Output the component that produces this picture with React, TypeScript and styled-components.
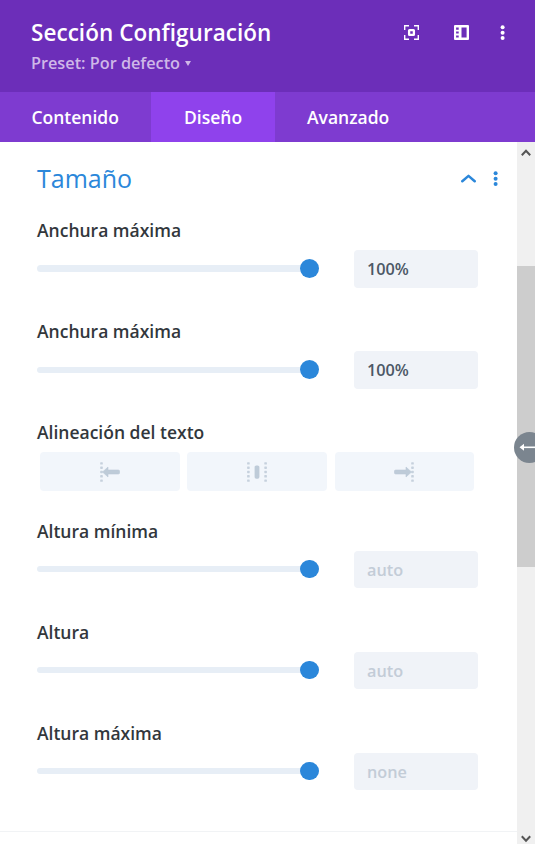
import React from 'react';
import styled, { createGlobalStyle } from 'styled-components';

const GlobalStyle = createGlobalStyle`
  * { box-sizing: border-box; }
  body {
    margin: 0;
    background: #fff;
    font-family: "Open Sans", sans-serif;
    font-weight: 600;
    overflow: hidden;
  }
  svg { display: block; flex: none; }
  button, input { font: inherit; border: 0; padding: 0; margin: 0; }
`;

const Modal = styled.div`
  width: 535px;
  height: 844px;
  display: flex;
  flex-direction: column;
  overflow: hidden;
  position: relative;
`;

const Header = styled.header`
  height: 92px;
  flex: none;
  display: flex;
  justify-content: space-between;
  padding: 17px 30.5px 0 31px;
  background: #6c2eb9;
  color: #fff;
`;

const Title = styled.h1`
  margin: 0;
  font-size: 22.5px;
  line-height: 32px;
  font-weight: 600;
  letter-spacing: 0.04px;
  white-space: nowrap;
`;

const Preset = styled.div`
  display: flex;
  align-items: center;
  gap: 5px;
  font-size: 16.25px;
  line-height: 28px;
  color: #cfb7e8;
`;

const HeaderActions = styled.div`
  display: flex;
  align-items: center;
  height: 15px;
  margin-top: 8px;
`;

const IconButton = styled.button<{ $gap?: number }>`
  display: flex;
  background: none;
  color: inherit;
  margin-left: ${({ $gap = 0 }) => $gap}px;
`;

const Tabs = styled.nav`
  height: 50px;
  flex: none;
  display: flex;
  background: #7e3bd0;
`;

const Tab = styled.button<{ $width: number; $inset?: number; $active?: boolean }>`
  width: ${({ $width }) => $width}px;
  height: 50px;
  padding-left: ${({ $inset = 32 }) => $inset}px;
  text-align: left;
  font-size: 17.5px;
  color: #fff;
  background: ${({ $active }) => ($active ? '#8f42ec' : 'transparent')};
`;

const Body = styled.div`
  display: flex;
  height: 702px;
`;

const Panel = styled.main`
  width: 517px;
  background: #fff;
`;

const Section = styled.section`
  height: 690px;
  padding-left: 37px;
  border-bottom: 1px solid #f1f3f5;
`;

const SectionHeader = styled.div`
  height: 75px;
  display: flex;
  justify-content: space-between;
  padding-right: 19px;
  color: #2b87da;
`;

const SectionTitle = styled.h2`
  margin: 0;
  padding-top: 19px;
  font-size: 25px;
  line-height: 34px;
  font-weight: 400;
`;

const SectionActions = styled.div`
  display: flex;
  align-items: center;
  height: 15px;
  margin-top: 29px;
`;

const Field = styled.div<{ $space: number }>`
  margin-bottom: ${({ $space }) => $space}px;
`;

const Label = styled.label`
  display: block;
  height: 27px;
  margin-bottom: 6px;
  font-size: 17.5px;
  line-height: 27px;
  color: #32373c;
`;

const Control = styled.div`
  display: flex;
  align-items: flex-start;
  gap: 35px;
`;

const Slider = styled.div<{ $knob: number }>`
  width: 282px;
  height: ${({ $knob }) => $knob}px;
  margin-top: 9px;
  display: flex;
  align-items: center;
`;

const Track = styled.div<{ $thick: number }>`
  width: 263px;
  height: ${({ $thick }) => $thick}px;
  border-radius: 4px 0 0 4px;
  background: #e7eef6;
`;

const Knob = styled.div<{ $size: number }>`
  width: 19px;
  height: ${({ $size }) => $size}px;
  border-radius: 10px;
  background: #2b87da;
  box-shadow: -3px 0 0 -3px #e7eef6;
`;

const ValueInput = styled.input<{ $height: number }>`
  width: 124px;
  height: ${({ $height }) => $height}px;
  padding: 0 13px;
  border-radius: 4px;
  background: #f0f3f8;
  color: #4c5866;
  font-size: 16.25px;
  outline: none;
  &::placeholder { color: #c3ccd7; opacity: 1; }
`;

const AlignGroup = styled.div`
  display: grid;
  grid-template-columns: 140px 140px 139px;
  justify-content: space-between;
  width: 437px;
  column-gap: 7px;
  padding-left: 3px;

  & > :nth-child(2) { margin-right: 0.5px; margin-left: -0.5px; }
`;

const AlignButton = styled.button`
  height: 39px;
  display: flex;
  align-items: center;
  justify-content: center;
  padding-right: 1px;
  border-radius: 4px;
  background: #f2f6fb;
`;

const Scrollbar = styled.div`
  width: 18px;
  display: flex;
  flex-direction: column;
  align-items: center;
  background: #f0f0f0;
`;

const ScrollArrow = styled.div<{ $down?: boolean }>`
  height: ${({ $down }) => ($down ? 9 : 124)}px;
  padding-top: ${({ $down }) => ($down ? 0 : 7)}px;
  margin-top: ${({ $down }) => ($down ? 'auto' : '0')};
`;

const ScrollThumb = styled.div`
  width: 18px;
  height: 301px;
  background: #cdcdcd;
`;

const ResizeHandle = styled.div`
  position: absolute;
  top: 432px;
  left: 514px;
  width: 31px;
  height: 31px;
  border-radius: 50%;
  background: #7b858f;
`;

const Dots = () => (
  <svg width="5" height="15" viewBox="0 0 5 15" fill="currentColor">
    <circle cx="2.6" cy="2.2" r="2" />
    <circle cx="2.6" cy="7.7" r="2" />
    <circle cx="2.6" cy="13" r="2" />
  </svg>
);

const FocusIcon = () => (
  <svg width="15" height="15" viewBox="0 0 15 15" fill="none" stroke="#fff">
    <path d="M.7 5V.7H5M10 .7h4.3V5M14.3 10v4.3H10M5 14.3H.7V10" strokeWidth="1.4" />
    <rect x="5.1" y="5.1" width="4.8" height="4.8" rx=".4" strokeWidth="2.3" />
  </svg>
);

const LayoutIcon = () => (
  <svg width="15" height="15" viewBox="0 0 15 15">
    <path
      fill="#fff"
      fillRule="evenodd"
      d="M1 0h13a1 1 0 0 1 1 1v13a1 1 0 0 1-1 1H1a1 1 0 0 1-1-1V1a1 1 0 0 1 1-1ZM2.1 2.6v2.1h2.6V2.6ZM2.1 6.5v2.1h2.6V6.5ZM2.1 10.4v2.1h2.6v-2.1ZM7.5 2.5v10h5.1v-10Z"
    />
  </svg>
);

const Chevron = () => (
  <svg width="15" height="9" viewBox="0 0 15 9" fill="none">
    <path d="M1.3 7.2 7.5 1.9l6.2 5.3" stroke="currentColor" strokeWidth="2.5" strokeLinecap="round" strokeLinejoin="round" />
  </svg>
);

const ScrollChevron = ({ down }: { down?: boolean }) => (
  <svg width="10" height="8" viewBox="0 0 10 8" fill="none">
    <path d={down ? 'M.8 1.2 5 5.7l4.2-4.5' : 'M.8 6.2 5 1.7l4.2 4.5'} stroke="#555" strokeWidth="2" />
  </svg>
);

const dotRows = [1.4, 5.7, 10, 14.3, 18.6];

const DottedLine = ({ x }: { x: number }) => (
  <g fill="#c6d1dd">
    {dotRows.map((y) => (
      <rect key={y} x={x} y={y - 1.2} width="2.6" height="2.4" rx=".6" />
    ))}
  </g>
);

const AlignSide = ({ right }: { right?: boolean }) => (
  <svg width="20" height="20" viewBox="0 0 20 20">
    <g transform={right ? 'matrix(-1 0 0 1 20 0)' : undefined}>
      <DottedLine x={0.2} />
      <path
        d="M2.5 10 8 5v3h10.3q1.5 0 1.5 2t-1.5 2H8v3Z"
        fill="#becbd8"
        stroke="#becbd8"
        strokeWidth=".6"
        strokeLinejoin="round"
      />
    </g>
  </svg>
);

const AlignMiddle = () => (
  <svg width="20" height="20" viewBox="0 0 20 20">
    <DottedLine x={0.1} />
    <rect x="7.6" y="3.4" width="4.8" height="13.4" rx="1.7" fill="#becbd8" />
    <DottedLine x={17.3} />
  </svg>
);

type RangeProps = {
  label: string;
  value?: string;
  placeholder?: string;
  tall?: boolean;
  thick?: number;
};

const RangeField = ({ label, value, placeholder, tall, thick = 6 }: RangeProps) => {
  const knob = tall ? 19 : 18;
  return (
    <Field $space={tall ? 30 : 31}>
      <Label>{label}</Label>
      <Control>
        <Slider $knob={knob}>
          <Track $thick={thick} />
          <Knob $size={knob} />
        </Slider>
        <ValueInput $height={tall ? 38 : 37} defaultValue={value} placeholder={placeholder} />
      </Control>
    </Field>
  );
};

export default function App() {
  return (
    <>
      <GlobalStyle />
      <Modal>
        <Header>
          <div>
            <Title>Sección Configuración</Title>
            <Preset>
              Preset: Por defecto
              <svg width="6" height="6" viewBox="0 0 6 6">
                <path d="M0 1h6L3 6Z" fill="currentColor" />
              </svg>
            </Preset>
          </div>
          <HeaderActions>
            <IconButton><FocusIcon /></IconButton>
            <IconButton $gap={35}><LayoutIcon /></IconButton>
            <IconButton $gap={31}><Dots /></IconButton>
          </HeaderActions>
        </Header>
        <Tabs>
          <Tab $width={151} $inset={31.4}>Contenido</Tab>
          <Tab $width={124} $inset={33} $active>Diseño</Tab>
          <Tab $width={147}>Avanzado</Tab>
        </Tabs>
        <Body>
          <Panel>
            <Section>
              <SectionHeader>
                <SectionTitle>Tamaño</SectionTitle>
                <SectionActions>
                  <IconButton><Chevron /></IconButton>
                  <IconButton $gap={17}><Dots /></IconButton>
                </SectionActions>
              </SectionHeader>
              <RangeField label="Anchura máxima" value="100%" tall thick={7} />
              <RangeField label="Anchura máxima" value="100%" tall />
              <Field $space={27}>
                <Label>Alineación del texto</Label>
                <AlignGroup>
                  <AlignButton><AlignSide /></AlignButton>
                  <AlignButton><AlignMiddle /></AlignButton>
                  <AlignButton><AlignSide right /></AlignButton>
                </AlignGroup>
              </Field>
              <RangeField label="Altura mínima" placeholder="auto" />
              <RangeField label="Altura" placeholder="auto" />
              <RangeField label="Altura máxima" placeholder="none" />
            </Section>
          </Panel>
          <Scrollbar>
            <ScrollArrow><ScrollChevron /></ScrollArrow>
            <ScrollThumb />
            <ScrollArrow $down><ScrollChevron down /></ScrollArrow>
          </Scrollbar>
        </Body>
        <ResizeHandle>
          <svg width="31" height="31" viewBox="0 0 31 31">
            <path d="M9 15.3h14" stroke="#fff" strokeWidth="1.6" />
            <path d="M5.5 15.3 10 11.8v7ZM25.5 15.3 21 11.8v7Z" fill="#fff" />
          </svg>
        </ResizeHandle>
      </Modal>
    </>
  );
}
